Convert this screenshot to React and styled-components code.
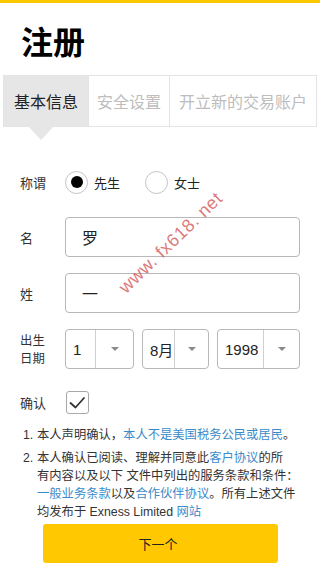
import React from "react";
import styled, { createGlobalStyle } from "styled-components";

const GlobalStyle = createGlobalStyle`
  html, body { margin: 0; padding: 0; background: #fff; }
  body {
    font-family: "Liberation Sans", "Noto Sans CJK SC", sans-serif;
    color: #333;
  }
  * { box-sizing: border-box; }
`;

const Page = styled.div`
  position: relative;
  width: 320px;
  height: 580px;
  overflow: hidden;
  background: #fff;
`;

const TopBar = styled.div`
  height: 3px;
  background: #fcc800;
`;

const Title = styled.h1`
  margin: 19px 0 17px;
  padding: 0 21px;
  font-size: 32px;
  line-height: 36px;
  font-weight: 700;
  color: #000;
  font-family: "Noto Sans CJK SC", sans-serif;
`;

const Tabs = styled.div`
  display: flex;
  margin: 0 3px;
  height: 52px;
  border: 1px solid #e4e4e4;
`;

const Tab = styled.div`
  position: relative;
  display: flex;
  align-items: center;
  justify-content: center;
  padding: 0 ${(p) => (p.$active ? "10px" : "8px")};
  flex: ${(p) => (p.$grow ? 1 : "none")};
  font-size: 16px;
  font-family: "Noto Sans CJK SC", sans-serif;
  color: ${(p) => (p.$active ? "#222" : "#bdbdbd")};
  background: ${(p) => (p.$active ? "#e6e6e6" : "#fff")};
  border-left: ${(p) => (p.$first ? "none" : "1px solid #e4e4e4")};
  white-space: nowrap;

  &::after {
    content: "";
    display: ${(p) => (p.$active ? "block" : "none")};
    position: absolute;
    top: 100%;
    left: 24px;
    border-top: 14px solid #e6e6e6;
    border-left: 13px solid transparent;
    border-right: 13px solid transparent;
  }
`;

const Form = styled.div`
  padding: 0 20px;
  display: flex;
  flex-direction: column;
`;

const Row = styled.div`
  display: flex;
  align-items: center;
  margin-top: ${(p) => p.$top}px;
  min-height: 24px;
`;

const Label = styled.div`
  width: 45px;
  flex: none;
  font-size: 13px;
  line-height: 17px;
  color: #333;
  font-family: "Noto Sans CJK SC", sans-serif;
`;

const LabelLines = styled.div`
  width: 45px;
  flex: none;
  display: flex;
  flex-direction: column;
  font-size: 12.4px;
  line-height: 18px;
  color: #333;
  font-family: "Noto Sans CJK SC", sans-serif;
`;

const RadioGroup = styled.div`
  display: flex;
  align-items: center;
`;

const RadioOption = styled.label`
  display: flex;
  align-items: center;
  gap: 6px;
  margin-right: 25px;
  font-size: 13px;
  color: #222;
  font-family: "Noto Sans CJK SC", sans-serif;
`;

const RadioCircle = styled.span`
  width: 23px;
  height: 23px;
  border-radius: 50%;
  border: 1px solid #c4c4c4;
  display: flex;
  align-items: center;
  justify-content: center;

  &::after {
    content: "";
    display: ${(p) => (p.$checked ? "block" : "none")};
    width: 12px;
    height: 12px;
    border-radius: 50%;
    background: #000;
  }
`;

const Input = styled.div`
  flex: 1;
  height: 40px;
  border: 1px solid #b8b8b8;
  border-radius: 4px;
  padding-left: 16px;
  display: flex;
  align-items: center;
  font-size: 16px;
  color: #222;
  font-family: "Noto Sans CJK SC", sans-serif;
`;

const DateGrid = styled.div`
  flex: 1;
  display: grid;
  grid-template-columns: 69px 67px 1fr;
  column-gap: 8px;
`;

const Select = styled.div`
  height: 40px;
  border: 1px solid #b8b8b8;
  border-radius: 4px;
  display: flex;
`;

const SelectValue = styled.div`
  flex: 1;
  display: flex;
  align-items: center;
  padding-left: 7px;
  font-size: 15px;
  color: #222;
  font-family: "Liberation Sans", "Noto Sans CJK SC", sans-serif;
`;

const SelectCaret = styled.div`
  width: ${(p) => p.$w}px;
  border-left: 1px solid #cfcfcf;
  display: flex;
  align-items: center;
  justify-content: center;

  &::after {
    content: "";
    border-top: 4px solid #8a8a8a;
    border-left: 4px solid transparent;
    border-right: 4px solid transparent;
  }
`;

const CheckBox = styled.div`
  width: 23px;
  height: 23px;
  margin-left: 1px;
  border: 1px solid #a8a8a8;
  border-radius: 3px;
  display: flex;
  align-items: center;
  justify-content: center;
`;

const Terms = styled.ol`
  list-style: none;
  margin: 12px 0 0 3px;
  padding: 0;
  font-size: 12.3px;
  line-height: 18px;
  color: #333;
  font-family: "Liberation Sans", "Noto Sans CJK SC", sans-serif;
`;

const Term = styled.li`
  display: flex;
  margin-top: ${(p) => p.$top || 0}px;
`;

const Num = styled.span`
  width: 14px;
  flex: none;
`;

const TermText = styled.span`
  white-space: nowrap;
`;

const Link = styled.a`
  color: #3b8bc9;
  text-decoration: none;
`;

const Button = styled.button`
  display: block;
  width: 235px;
  height: 39px;
  margin: 3px auto 0;
  background: #ffc800;
  border: none;
  border-radius: 3px;
  font-size: 13px;
  color: #222;
  font-family: "Noto Sans CJK SC", sans-serif;
  padding-left: 2px;
`;

const Watermark = styled.div`
  position: absolute;
  left: 171px;
  top: 243px;
  transform: translate(-50%, -50%) rotate(-44deg);
  font-family: "Liberation Sans", sans-serif;
  font-size: 18px;
  letter-spacing: 0.6px;
  color: rgba(212, 88, 88, 0.8);
  white-space: pre;
  pointer-events: none;
`;

export default function App() {
  return (
    <>
      <GlobalStyle />
      <Page>
        <TopBar />
        <Title>注册</Title>
        <Tabs>
          <Tab $active $first>基本信息</Tab>
          <Tab>安全设置</Tab>
          <Tab $grow>开立新的交易账户</Tab>
        </Tabs>
        <Form>
          <Row $top={43}>
            <Label>称谓</Label>
            <RadioGroup>
              <RadioOption>
                <RadioCircle $checked />
                先生
              </RadioOption>
              <RadioOption>
                <RadioCircle />
                女士
              </RadioOption>
            </RadioGroup>
          </Row>
          <Row $top={23}>
            <Label>名</Label>
            <Input>罗</Input>
          </Row>
          <Row $top={16}>
            <Label>姓</Label>
            <Input>一</Input>
          </Row>
          <Row $top={16}>
            <LabelLines>
              <span>出生</span>
              <span>日期</span>
            </LabelLines>
            <DateGrid>
              <Select>
                <SelectValue>1</SelectValue>
                <SelectCaret $w={38} />
              </Select>
              <Select>
                <SelectValue>8月</SelectValue>
                <SelectCaret $w={34} />
              </Select>
              <Select>
                <SelectValue>1998</SelectValue>
                <SelectCaret $w={36} />
              </Select>
            </DateGrid>
          </Row>
          <Row $top={21}>
            <Label>确认</Label>
            <CheckBox>
              <svg width="21" height="21" viewBox="0 0 21 21">
                <polyline
                  points="3.5,11 8.5,15.5 17,6"
                  fill="none"
                  stroke="#333"
                  strokeWidth="1.8"
                  strokeLinecap="round"
                  strokeLinejoin="round"
                />
              </svg>
            </CheckBox>
          </Row>
          <Terms>
            <Term>
              <Num>1.</Num>
              <TermText>
                本人声明确认，<Link>本人不是美国税务公民或居民</Link>。
              </TermText>
            </Term>
            <Term $top={5}>
              <Num>2.</Num>
              <TermText>
                本人确认已阅读、理解并同意此<Link>客户协议</Link>的所
                <br />
                有内容以及以下 文件中列出的服务条款和条件：
                <br />
                <Link>一般业务条款</Link>以及<Link>合作伙伴协议</Link>。所有上述文件
                <br />
                均发布于 Exness Limited <Link>网站</Link>
              </TermText>
            </Term>
          </Terms>
          <Button>下一个</Button>
        </Form>
        <Watermark>www. fx618. net</Watermark>
      </Page>
    </>
  );
}
